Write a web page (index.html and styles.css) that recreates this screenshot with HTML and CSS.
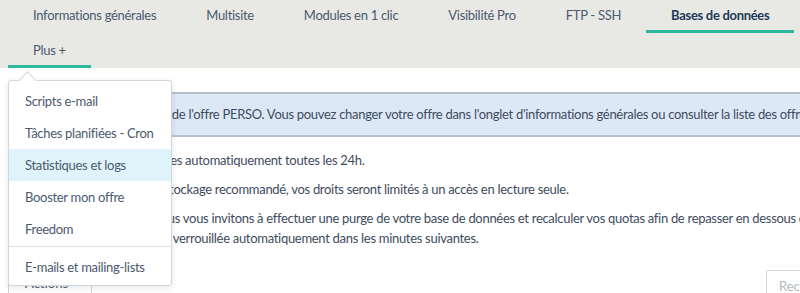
FILE: index.html
```
<!DOCTYPE html>
<html lang="fr">
<head>
  <meta charset="UTF-8">
  <title>Bases de données</title>
  <link rel="stylesheet" href="styles.css">
</head>
<body>
  <nav class="tabs">
    <div class="tab-row">
      <a class="tab">Informations générales</a>
      <a class="tab">Multisite</a>
      <a class="tab">Modules en 1 clic</a>
      <a class="tab">Visibilité Pro</a>
      <a class="tab">FTP - SSH</a>
      <a class="tab tab-active">Bases de données</a>
    </div>
    <div class="tab-row">
      <a class="tab tab-open">Plus +</a>
    </div>
  </nav>

  <main class="content">
    <div class="notice">Vous profitez actuellement de l'offre PERSO. Vous pouvez changer votre offre dans l'onglet d'informations générales ou consulter la liste des offres disponibles.</div>
    <p>Les tailles de BD sont rafraîchies automatiquement toutes les 24h.</p>
    <p>Au-delà du seuil d'espace de stockage recommandé, vos droits seront limités à un accès en lecture seule.</p>
    <p>Si vous dépassez ce quota, nous vous invitons à effectuer une purge de votre base de données et recalculer vos quotas afin de repasser en dessous du quota.<br>À défaut, votre base sera alors verrouillée automatiquement dans les minutes suivantes.</p>
    <div class="toolbar">
      <button class="actions-btn">Actions <span class="chevron">&#8964;</span></button>
      <input class="search" type="text" placeholder="Rechercher">
    </div>
  </main>

  <!-- open "Plus +" menu -->
  <div class="dropdown">
    <a class="dropdown-item">Scripts e-mail</a>
    <a class="dropdown-item">Tâches planifiées - Cron</a>
    <a class="dropdown-item hover">Statistiques et logs</a>
    <a class="dropdown-item">Booster mon offre</a>
    <a class="dropdown-item">Freedom</a>
    <div class="dropdown-divider"></div>
    <a class="dropdown-item">E-mails et mailing-lists</a>
  </div>
</body>
</html>
```

FILE: styles.css
```
body {
  margin: 0;
  font-family: 'Lato', 'Open Sans', sans-serif;
  font-size: 13px;
  letter-spacing: -0.3px;
  color: #3e4c5e;
  background: #fff;
  overflow: hidden;
}
.tabs {
  background: #e8e9e5;
  padding: 0 8px;
  margin-top: -2px;
}
.tab-row {
  display: flex;
}
.tab {
  display: block;
  box-sizing: border-box;
  height: 35px;
  padding: 0 25px;
  line-height: 35px;
  border-bottom: 3px solid transparent;
  color: #4b5a6e;
  white-space: nowrap;
  cursor: pointer;
}
.tab-active {
  font-weight: bold;
  color: #22395a;
  border-bottom-color: #2bbb9c;
}
.tab-open {
  border-bottom-color: #2bbb9c;
}
.content {
  width: 962px;
  padding: 24px 8px 0 8px;
}
.notice {
  background: #dce8f6;
  border-top: 2px solid #b7c1cd;
  border-bottom: 2px solid #b7c1cd;
  padding: 0 16px;
  height: 41px;
  line-height: 41px;
  white-space: nowrap;
}
.content p {
  margin: 9px 0 0 0;
  line-height: 20px;
  white-space: nowrap;
}
.content .notice + p {
  margin-top: 13px;
}
.toolbar {
  display: flex;
  justify-content: space-between;
  align-items: flex-start;
  margin-top: 22px;
}
.actions-btn {
  font: inherit;
  color: #4b5a6e;
  background: #fff;
  border: 1px solid #cfd3d8;
  border-radius: 2px;
  width: 84px;
  height: 32px;
  margin-top: 4px;
  text-align: left;
  padding: 0 16px;
}
.chevron {
  margin-left: 8px;
}
.search {
  font: inherit;
  width: 204px;
  height: 32px;
  box-sizing: border-box;
  border: 1px solid #d6d9dd;
  border-radius: 2px;
  padding: 0 12px;
  color: #3e4c5e;
}
.search::placeholder {
  color: #b4b9bf;
}
.dropdown {
  position: absolute;
  left: 8px;
  top: 80px;
  width: 164px;
  box-sizing: border-box;
  background: #fff;
  border: 1px solid #d3d7dc;
  border-radius: 3px;
  box-shadow: 0 2px 6px rgba(40, 55, 75, 0.12);
  padding: 4px 0 2px 0;
}
.dropdown::before {
  content: '';
  position: absolute;
  left: 12px;
  top: -7px;
  width: 12px;
  height: 12px;
  background: #fff;
  border-left: 1px solid #d3d7dc;
  border-top: 1px solid #d3d7dc;
  transform: rotate(45deg);
}
.dropdown-item {
  display: block;
  position: relative;
  height: 32px;
  line-height: 32px;
  padding: 0 16px;
  color: #4b5a6e;
  white-space: nowrap;
  cursor: pointer;
}
.dropdown-item.hover {
  background: #dff3fa;
}
.dropdown-divider {
  height: 1px;
  background: #dcdfe3;
  margin: 1px 0 4px 0;
}
```
